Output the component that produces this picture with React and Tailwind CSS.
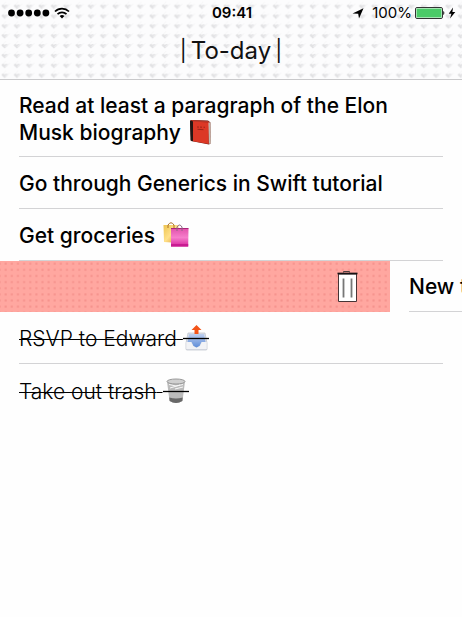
import React from 'react';

function HeartPattern() {
  return (
    <svg className="absolute inset-0 -z-10 h-full w-full" aria-hidden="true">
      <defs>
        <pattern id="hearts" x="0" y="1.7" width="12.33" height="9.85" patternUnits="userSpaceOnUse">
          <path d="m5 7 5-5M3 3l3-3" stroke="#f6f6f7" strokeWidth="1" />
          <path d="M4.6 7.3 1.6 4.7C1 3.200 3 2.200 4.600 3.600 6 2.300 7.900 2.700 7.500 4.500Z" fill="#e2e2e4" />
          <path d="m5.200 5.800 2.600-2.600" stroke="#eeeef0" strokeWidth="1.200" />
        </pattern>
      </defs>
      <rect width="100%" height="100%" fill="url(#hearts)" />
    </svg>
  );
}

function DotPattern() {
  return (
    <svg className="absolute inset-0 -z-10 h-full w-full" aria-hidden="true">
      <defs>
        <pattern id="dots" x="2.6" y="-0.4" width="6.13" height="6.13" patternUnits="userSpaceOnUse">
          <rect x="2.1" y="2.1" width="2" height="2" fill="#f5928c" />
        </pattern>
      </defs>
      <rect width="100%" height="100%" fill="url(#dots)" />
    </svg>
  );
}

function StatusBar() {
  return (
    <div className="grid h-[26px] grid-cols-3 items-center pr-[6px] pl-2 text-[15px] leading-[26px] text-black">
      <div className="flex items-center gap-1">
        <svg width="42" height="8" viewBox="0 0 42 8" role="img" aria-label="Signal strength">
          {[3.5, 12.1, 20.7, 29.3, 37.9].map((cx) => (
            <circle key={cx} cx={cx} cy="4" r="3.4" />
          ))}
        </svg>
        <svg width="16" height="12" viewBox="0 0 16 12" fill="none" stroke="#000" strokeWidth="1.7" role="img" aria-label="Wi-Fi">
          <path d="M1 4.5a10 10 0 0 1 14 0M3.500 7.200a6.400 6.400 0 0 1 9 0" />
          <path d="M8 11.500 5.600 9.100a3.400 3.400 0 0 1 4.800 0Z" fill="#000" stroke="none" />
        </svg>
      </div>
      <time className="text-center font-semibold">09:41</time>
      <div className="flex items-center justify-end">
        <svg className="mr-2" width="12" height="11" viewBox="0 0 12 11" role="img" aria-label="Location">
          <path d="M11.500.3 7 10.500 6.200 5.800.5 5.500Z" />
        </svg>
        <span className="mr-[3px]">100%</span>
        <svg width="30" height="12" viewBox="0 0 30 12" role="img" aria-label="Battery full">
          <rect x=".5" y=".5" width="27" height="11" rx="1.5" fill="#fff" stroke="#333" />
          <rect x="1.5" y="1.5" width="25" height="9" rx=".5" fill="#4bcb68" />
          <path d="M28.200 4c1.600.6 1.600 3.400 0 4Z" fill="#222" />
        </svg>
        <svg className="ml-[3px]" width="8" height="12" viewBox="0 0 8 12" role="img" aria-label="Charging">
          <path d="M5 .5.700 6.700h2.700L2 11.500l5.300-6.400H4.400Z" />
        </svg>
      </div>
    </div>
  );
}

function Book() {
  return (
    <svg className="ml-[2px] inline-block align-[-5px]" width="26" height="26" viewBox="0 0 26 26" role="img" aria-label="Book">
      <path d="m2 2 1-1 17 .5 2.500 2L23 24l-2 1.500L3 22Z" fill="#6b1d15" />
      <path d="m20 3 2.500.5.300 20.500-2 1Z" fill="#ded3c8" />
      <path d="m21.600 3.500.2 21" stroke="#a39b94" strokeWidth=".6" />
      <path d="m3 1 17 1 2 1.700-17-.7Z" fill="#b63627" />
      <path d="M2 1.500 5 2.500v19.800L2.500 21.500Z" fill="#241714" />
      <path d="m5 2.500 15.500 1 .2 21.500L5 22.300Z" fill="#dc3826" />
      <path d="m9 8 2 .1m1 0 2 .1m1.500 0 1.500.1M9.500 10.300l6 .4" stroke="#9c2519" strokeWidth="1" />
    </svg>
  );
}

function ShoppingBags() {
  return (
    <svg className="ml-[2px] inline-block align-[-5px]" width="26" height="26" viewBox="0 0 26 26" role="img" aria-label="Shopping bags">
      <defs>
        <linearGradient id="gold" x2="1" y2="1"><stop stopColor="#edc34f" /><stop offset=".5" stopColor="#ffe18a" /><stop offset="1" stopColor="#d8922c" /></linearGradient>
        <linearGradient id="pink" x2="0" y2="1"><stop stopColor="#e252ac" /><stop offset=".5" stopColor="#f67ecb" /><stop offset="1" stopColor="#d6219b" /></linearGradient>
      </defs>
      <path d="M.5 3h15v18L1 20Z" fill="url(#gold)" />
      <path d="M5 6V3q3-4.500 6 0v3" fill="none" stroke="#ac7227" />
      <path d="M8 6.500h17.500l-.3 18H8Z" fill="url(#pink)" />
      <path d="M8 6.500h17.500" stroke="#aa2378" />
      <path d="M14 9V5q2.500-4 5 0v4" fill="none" stroke="#8e6685" />
      <path d="M8 22h17.200v2.500H8Z" fill="#c81b91" />
    </svg>
  );
}

function Outbox() {
  return (
    <svg className="inline-block align-[-5px]" width="26" height="26" viewBox="0 0 26 26" role="img" aria-label="Outbox">
      <defs>
        <linearGradient id="tray" x2="0" y2="1"><stop stopColor="#bdcff0" /><stop offset="1" stopColor="#5d8cd8" /></linearGradient>
      </defs>
      <path d="M5 8h17l2 10v6q0 1-1 1H4q-1 0-1-1v-6Z" fill="#dde1e8" stroke="#bbc1cb" strokeWidth=".7" />
      <path d="M6 9h15l1.500 8h-4l-2 4-3 1.500-3-1.500-2-4h-4Z" fill="url(#tray)" />
      <path d="M3.300 17H8l2 4 3.500 2 3.500-2 2-4h4.700v7H3.300Z" fill="#f2f3f6" />
      <path d="m13.500 0 5 5h-3v4h-4V5h-3Z" fill="#f35419" />
      <path d="M0 13.500h26" stroke="#000" strokeWidth="1.300" />
    </svg>
  );
}

function Wastebasket() {
  return (
    <svg className="inline-block align-[-5px]" width="26" height="26" viewBox="0 0 26 26" role="img" aria-label="Wastebasket">
      <defs>
        <pattern id="mesh" width="2" height="2" patternUnits="userSpaceOnUse">
          <path d="m0 0 2 2M2 0 0 2" stroke="#858585" strokeWidth=".4" />
        </pattern>
      </defs>
      <path d="m4 3 2.500 20q6.500 4 13 0L22 3Z" fill="#dedede" />
      <path d="m4 3 2.500 20q6.500 4 13 0L22 3Z" fill="url(#mesh)" />
      <ellipse cx="13" cy="3.500" rx="9" ry="2.500" fill="#d0d0d0" stroke="#999" />
      <path d="M6 6.500q7 3 14 0M7 10l10-3M12 11l8-2" fill="none" stroke="#f8f8f8" />
      <path d="m6.300 19.500.4 3.500q6.300 4 12.600 0l.4-3.500q-6.700 2-13.400 0Z" fill="#686868" />
      <path d="M0 13.500h26" stroke="#000" strokeWidth="1.300" />
    </svg>
  );
}

function Task({ done, last, icon, children }) {
  return (
    <li className="px-[19px]">
      <div className={`flex min-h-[52px] items-center pt-3 pb-[10px] ${last ? '' : 'border-b border-[#d3d3d5]'}`}>
        <p className={done ? 'font-light' : 'font-medium'}>
          <span className={done ? 'line-through decoration-1' : ''}>{children} </span>
          {icon}
        </p>
      </div>
    </li>
  );
}

export default function App() {
  return (
    <main className="min-h-screen bg-[#fefefe] font-['Inter','Liberation_Sans',sans-serif] text-black">
      <header className="relative isolate border-b border-[#c9c9cb] bg-[#fcfcfd]">
        <HeartPattern />
        <StatusBar />
        <h1 className="flex h-[53px] justify-center gap-1 text-[24px] leading-[50px] font-normal text-[#111]">
          <span className="text-[21px]">|</span>
          To-day
          <span className="text-[21px]">|</span>
        </h1>
      </header>
      <ul className="text-[21px] leading-[27px]">
        <Task icon={<Book />}>Read at least a paragraph of the Elon Musk biography</Task>
        <Task>Go through Generics in Swift tutorial</Task>
        <Task icon={<ShoppingBags />}>Get groceries</Task>
        <li className="flex h-[51px] overflow-hidden">
          <button type="button" aria-label="Delete task" className="relative isolate flex flex-1 items-center justify-end bg-[#ffa7a0] pr-8">
            <DotPattern />
            <svg width="22" height="32" viewBox="0 0 22 32" aria-hidden="true">
              <path d="M7.500 1.500V.5h6v1" fill="none" stroke="#4b3d3d" />
              <path d="M2.500 3h18v27.500h-18Z" fill="#fff" stroke="#473536" />
              <path d="M1.500 2.500h20" stroke="#171214" strokeWidth="1.700" />
              <path d="M7.500 7.500v19M15.500 7.500v19" stroke="#777" strokeWidth="1.800" />
            </svg>
          </button>
          <div className="w-[72px] overflow-hidden pl-[19px]">
            <p className="h-full border-b border-[#d3d3d5] pt-3 font-medium whitespace-nowrap">New task</p>
          </div>
        </li>
        <Task done icon={<Outbox />}>RSVP to Edward</Task>
        <Task done last icon={<Wastebasket />}>Take out trash</Task>
      </ul>
    </main>
  );
}
